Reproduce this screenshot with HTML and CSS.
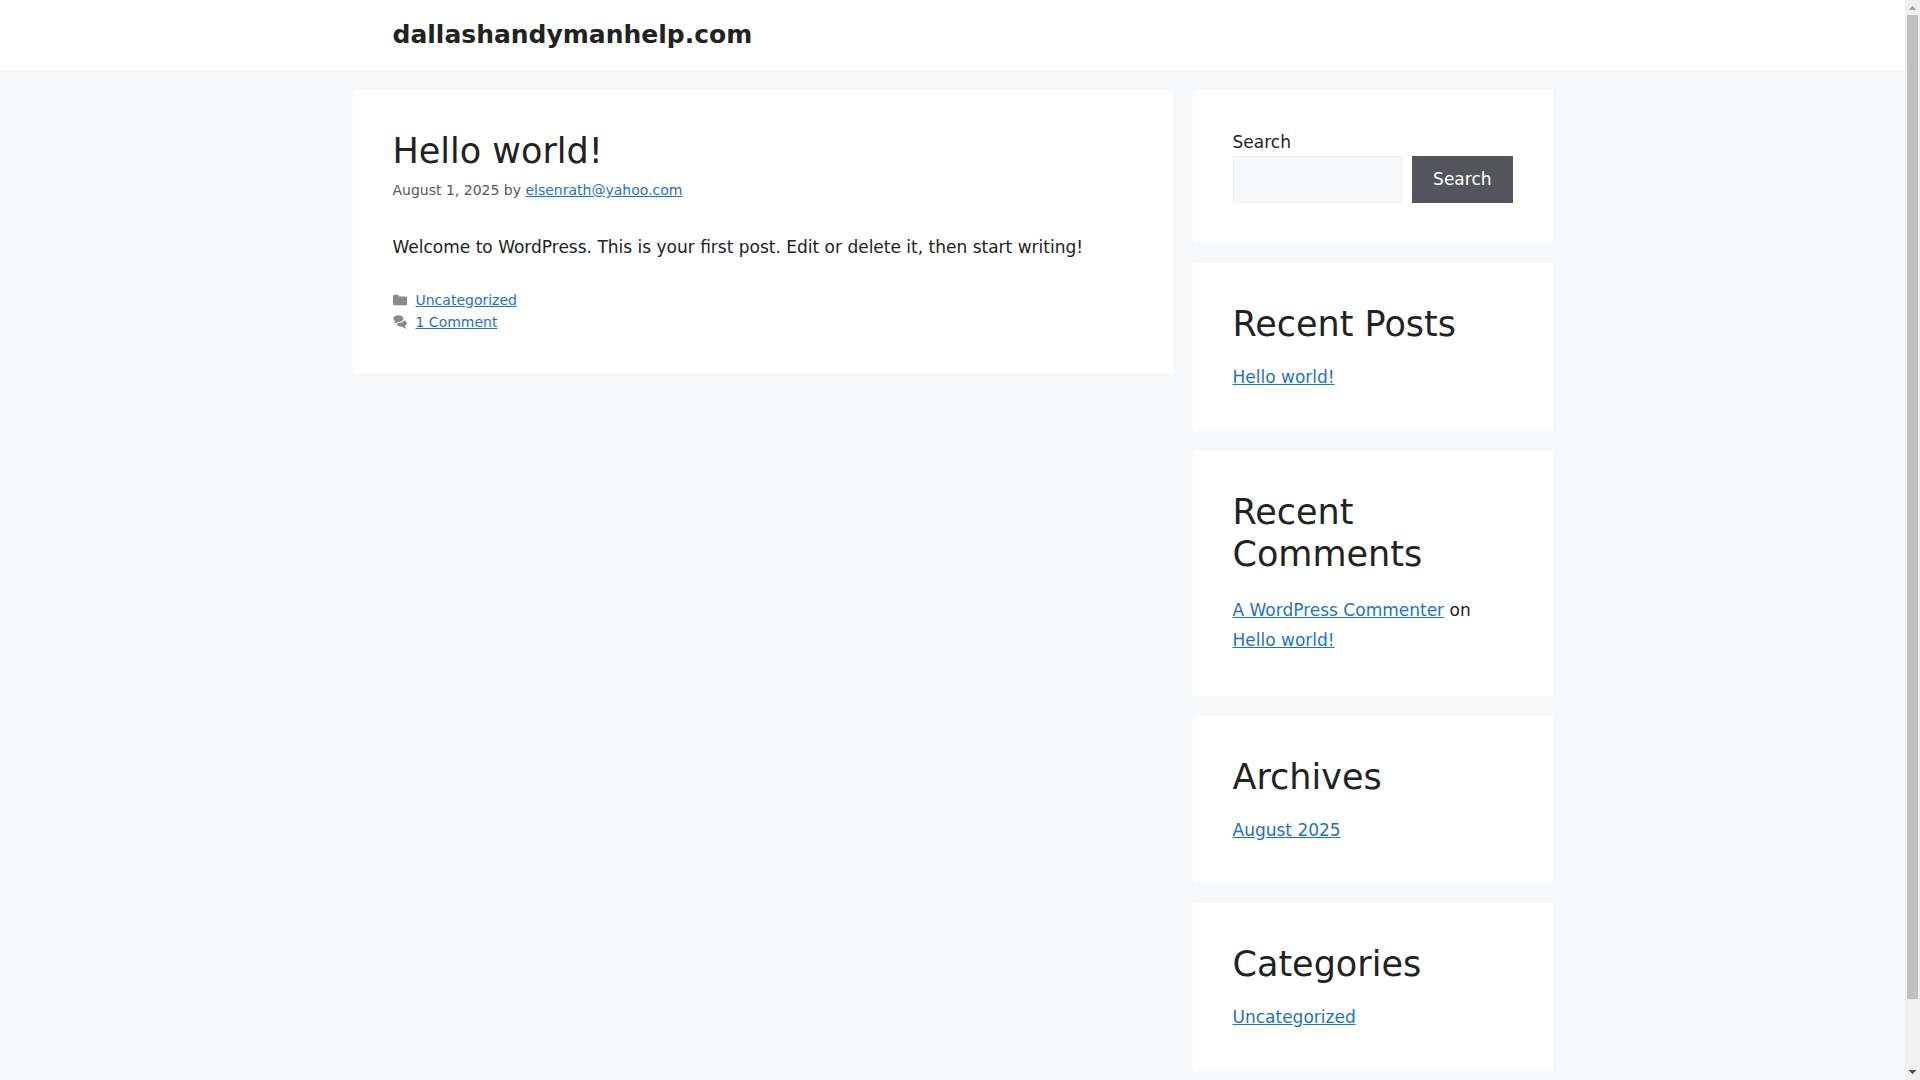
FILE: index.html
```html
<!DOCTYPE html>
<html lang="en">
<head>
<meta charset="utf-8">
<meta name="viewport" content="width=device-width, initial-scale=1">
<title>dallashandymanhelp.com</title>
<link rel="stylesheet" href="styles.css">
</head>
<body>
<div class="shell">
  <div class="page">
    <header class="site-header">
      <div class="inside-header">
        <p class="site-title"><a href="#">dallashandymanhelp.com</a></p>
      </div>
    </header>
    <div class="site-content">
      <main class="content-area">
        <article class="card">
          <h2 class="heading"><a href="#">Hello world!</a></h2>
          <div class="entry-meta">August 1, 2025 by <a href="#">elsenrath@yahoo.com</a></div>
          <p class="entry-content">Welcome to WordPress. This is your first post. Edit or delete it, then start writing!</p>
          <footer class="entry-footer">
            <div class="footer-item">
              <svg class="icon" viewBox="0 0 512 512" aria-hidden="true"><path d="M0 112c0-26.51 21.49-48 48-48h110.014a48 48 0 0143.592 27.907l12.349 26.791A16 16 0 00228.486 128H464c26.51 0 48 21.49 48 48v224c0 26.51-21.49 48-48 48H48c-26.51 0-48-21.49-48-48V112z"/></svg>
              <a href="#">Uncategorized</a>
            </div>
            <div class="footer-item">
              <svg class="icon" viewBox="0 0 512 512" aria-hidden="true"><path d="M132.838 329.973a435.298 435.298 0 0016.769-9.004c13.363-7.574 26.587-16.142 37.419-25.507 7.544.597 15.27.925 23.098.925 54.905 0 105.634-15.311 143.285-41.28 23.728-16.365 43.115-37.692 54.155-62.645 54.699 22.205 91.498 63.272 91.498 110.286 0 42.186-29.558 79.498-75.09 102.828 23.46 49.216 75.09 101.709 75.09 101.709s-115.837-38.35-154.424-78.46c-9.956 1.12-20.297 1.758-30.793 1.758-88.727 0-162.927-43.071-181.007-100.61z"/><path d="M383.371 132.502c0 70.603-82.961 127.787-185.216 127.787-10.496 0-20.837-.639-30.793-1.757-38.587 40.093-154.424 78.429-154.424 78.429s51.63-52.472 75.09-101.67c-45.532-23.321-75.09-60.619-75.09-102.79C12.938 61.9 95.9 4.716 198.155 4.716 300.41 4.715 383.37 61.9 383.37 132.502z"/></svg>
              <a href="#">1 Comment</a>
            </div>
          </footer>
        </article>
      </main>
      <aside class="sidebar">
        <section class="card">
          <form class="search-form" role="search">
            <label class="search-label" for="search">Search</label>
            <div class="search-row">
              <input class="search-input" id="search" type="search">
              <button class="search-button" type="button">Search</button>
            </div>
          </form>
        </section>
        <section class="card">
          <h2 class="heading">Recent Posts</h2>
          <ul class="widget-list">
            <li><a href="#">Hello world!</a></li>
          </ul>
        </section>
        <section class="card">
          <h2 class="heading">Recent Comments</h2>
          <ol class="widget-list comments">
            <li><a href="#">A WordPress Commenter</a> on <a href="#">Hello world!</a></li>
          </ol>
        </section>
        <section class="card">
          <h2 class="heading">Archives</h2>
          <ul class="widget-list">
            <li><a href="#">August 2025</a></li>
          </ul>
        </section>
        <section class="card">
          <h2 class="heading">Categories</h2>
          <ul class="widget-list">
            <li><a href="#">Uncategorized</a></li>
          </ul>
        </section>
      </aside>
    </div>
  </div>
  <div class="scrollbar" aria-hidden="true">
    <svg class="arrow" viewBox="0 0 15 15"><path fill="#a3a3a3" d="M7 6h1v1h1v1h1v1h1v1H4V9h1V8h1V7h1z"/></svg>
    <div class="track"><div class="thumb"></div></div>
    <svg class="arrow" viewBox="0 0 15 15"><path fill="#505050" d="M4 5h7v1h-1v1H9v1H8v1H7V8H6V7H5V6H4z"/></svg>
  </div>
</div>
</body>
</html>
```
FILE: styles.css
```css
*,
*::before,
*::after {
  box-sizing: border-box;
}

body {
  margin: 0;
  background: #f7f8f9;
  color: #222222;
  font-family: "DejaVu Sans", sans-serif;
  font-size: 17px;
  line-height: 1.5;
}

h2,
p,
ul,
ol {
  margin: 0;
  padding: 0;
  font-weight: 400;
}

a {
  color: #1e73be;
}

.shell {
  display: flex;
  height: 100vh;
  overflow: hidden;
}

.page {
  flex: 1;
  min-width: 0;
}

/* Header */
.site-header {
  background: #ffffff;
}

.inside-header {
  max-width: 1200px;
  margin: 0 auto;
  padding: 20px 40px;
}

.site-title {
  font-size: 25px;
  font-weight: 700;
  line-height: 1.2;
}

.site-title a,
.heading a {
  color: inherit;
  text-decoration: none;
}

/* Columns */
.site-content {
  display: grid;
  grid-template-columns: minmax(0, 1fr) 30%;
  align-items: start;
  gap: 20px;
  max-width: 1200px;
  margin: 20px auto;
}

.sidebar {
  display: flex;
  flex-direction: column;
  gap: 20px;
}

.card {
  padding: 40px;
  background: #ffffff;
}

.heading {
  font-size: 35px;
  line-height: 1.2;
}

/* Post */
.entry-meta {
  margin-top: 7px;
  color: #575760;
  font-size: 14px;
  line-height: 22px;
}

.entry-content {
  margin-top: 34px;
}

.entry-footer {
  margin-top: 28px;
  font-size: 14px;
  line-height: 22px;
}

.footer-item {
  display: flex;
  align-items: center;
  gap: 9px;
}

.icon {
  width: 14px;
  height: 14px;
  fill: #575760;
  opacity: 0.7;
}

/* Widgets */
.search-label {
  display: block;
}

.search-row {
  display: flex;
  gap: 10px;
}

.search-input {
  flex: 1;
  min-width: 0;
  padding: 10px 15px;
  border: 1px solid #eeeeee;
  border-radius: 0;
  background: #f7f8f9;
  color: #666666;
  font: inherit;
}

.search-button {
  padding: 10px 20px;
  border: 1px solid #55555e;
  background: #55555e;
  color: #ffffff;
  font: inherit;
}

.widget-list {
  margin-top: 20px;
  list-style: none;
}

.comments {
  line-height: 1.8;
}

/* Scrollbar */
.scrollbar {
  display: flex;
  flex-direction: column;
  width: 15px;
  background: #f0f0f0;
}

.arrow {
  width: 15px;
  height: 15px;
}

.track {
  flex: 1;
  padding: 0 2px;
}

.thumb {
  height: calc(100% * 15 / 16);
  background: #c1c1c1;
}
```
